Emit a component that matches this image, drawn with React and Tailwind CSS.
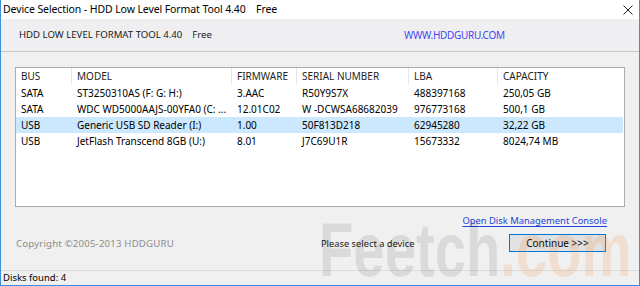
import React from "react";

const cols = [
  { key: "bus", label: "BUS", w: "w-[56px]" },
  { key: "model", label: "MODEL", w: "w-[160px]" },
  { key: "fw", label: "FIRMWARE", w: "w-[65px]" },
  { key: "sn", label: "SERIAL NUMBER", w: "w-[112px]" },
  { key: "lba", label: "LBA", w: "w-[89px]" },
  { key: "cap", label: "CAPACITY", w: "flex-1" },
];

const disks = [
  { bus: "SATA", model: "ST3250310AS (F: G: H:)", fw: "3.AAC", sn: "R50Y9S7X", lba: "488397168", cap: "250,05 GB" },
  { bus: "SATA", model: "WDC WD5000AAJS-00YFA0 (C: ...", fw: "12.01C02", sn: "W -DCWSA68682039", lba: "976773168", cap: "500,1 GB" },
  { bus: "USB", model: "Generic USB SD Reader (I:)", fw: "1.00", sn: "50F813D218", lba: "62945280", cap: "32,22 GB", selected: true },
  { bus: "USB", model: "JetFlash Transcend 8GB (U:)", fw: "8.01", sn: "J7C69U1R", lba: "15673332", cap: "8024,74 MB" },
];

const font = { fontFamily: '"Noto Sans", "Open Sans", sans-serif' };

export default function App() {
  return (
    <div
      className="relative w-[640px] h-[286px] overflow-hidden bg-[#f0f0f0] border-x border-b border-[#3d8fdc] flex flex-col text-[10px] text-black"
      style={font}
    >
      {/* Title bar */}
      <div className="h-[19px] bg-white flex items-center justify-between pl-[2px] pr-[6px] shrink-0">
        <span className="leading-none text-[10.5px] tracking-[-0.1px]">
          Device Selection - HDD Low Level Format Tool 4.40&nbsp;&nbsp;&nbsp;&nbsp;Free
        </span>
        <svg width="10" height="10" viewBox="0 0 10 10" className="mt-[1px]">
          <path d="M0.5 0.5 L9.5 9.5 M9.5 0.5 L0.5 9.5" stroke="#222" strokeWidth="1" />
        </svg>
      </div>

      {/* Header band */}
      <div className="h-[33px] shrink-0 flex items-center border-b border-[#c6c6c6] bg-[#efeff1]">
        <span className="ml-[18px] w-[385px] text-[9.6px] text-[#1a1a1a]">
          HDD LOW LEVEL FORMAT TOOL 4.40&nbsp;&nbsp;&nbsp;&nbsp;Free
        </span>
        <span className="text-[#4545f0] tracking-[-0.3px]">WWW.HDDGURU.COM</span>
      </div>

      {/* Content */}
      <div className="flex-1 flex flex-col px-[14px] pt-[15px]">
        <div className="h-[140px] bg-white border border-[#acacac] flex flex-col">
          <div className="h-[17px] flex items-stretch text-[#1e1e1e]">
            {cols.map((c, i) => (
              <div
                key={c.key}
                className={`${c.w} flex items-center pl-[5px] ${i < cols.length - 1 ? "border-r border-[#e5e5e5]" : ""}`}
              >
                {c.label}
              </div>
            ))}
          </div>
          {disks.map((d) => (
            <div
              key={d.sn}
              className={`h-[16px] flex items-center mr-[1px] ${d.selected ? "bg-[#cce8ff]" : ""}`}
            >
              {cols.map((c) => (
                <div key={c.key} className={`${c.w} pl-[5px] whitespace-nowrap overflow-hidden`}>
                  {d[c.key]}
                </div>
              ))}
            </div>
          ))}
        </div>

        <div className="flex justify-end mt-[6px] pr-[18px] leading-[16px]">
          <span className="text-[#1d45d8] text-[9.4px] underline underline-offset-2">Open Disk Management Console</span>
        </div>

        <div className="flex items-center mt-[5px]">
          <span className="w-[306px] text-[#8c8c8c] text-[9.6px] tracking-[0.2px] pl-[1px] mt-[2px]">Copyright ©2005-2013 HDDGURU</span>
          <span className="text-[#1a1a1a] text-[9.3px] mt-[2px]">Please select a device</span>
          <div className="ml-auto mr-[19px] w-[97px] h-[18px] border border-[#0078d7] bg-[#e1e1e1] flex items-center justify-center">
            Continue &gt;&gt;&gt;
          </div>
        </div>
      </div>

      {/* Status bar */}
      <div className="h-[15px] shrink-0 border-t border-[#dcdcdc] flex items-center pl-[2px] leading-none text-[9.5px]">
        Disks found: 4
      </div>

      {/* Watermark */}
      <div
        className="pointer-events-none absolute left-[318px] top-[212px] text-[76px] font-bold leading-none whitespace-nowrap origin-left scale-x-[0.74] select-none"
        style={{ fontFamily: '"Liberation Sans", Arial, sans-serif' }}
      >
        <span className="text-black/[0.09]">Feetch</span>
        <span className="text-[#f08030]/[0.16]">.com</span>
      </div>
    </div>
  );
}
